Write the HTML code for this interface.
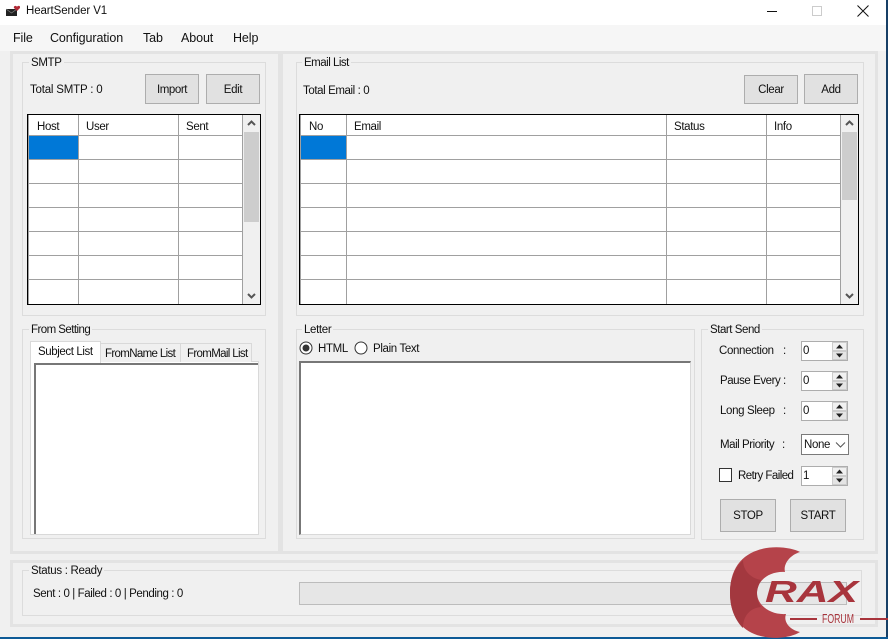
<!DOCTYPE html>
<html><head><meta charset="utf-8">
<style>
html,body{margin:0;padding:0}
body{width:888px;height:639px;overflow:hidden;position:relative;background:#f0f0f0;font-family:"Liberation Sans",sans-serif;font-size:11.500px;letter-spacing:-.35px;color:#111}
div,span.t{position:absolute;box-sizing:border-box}
span.t{white-space:nowrap;line-height:16px;margin-top:1px}
span.t.lbl{line-height:14px;margin-top:0}
.panel{border:3px solid #e3e3e3;background:#f0f0f0}
.grp{border:1px solid #dcdcdc}
.btn{background:#e1e1e1;border:1px solid #adadad;text-align:center;line-height:30px}
.tbl{background:#fff;border:1px solid #000;overflow:hidden}
.h{background:#a0a0a0;height:1px}
.v{background:#a0a0a0;width:1px}
.sb{background:#f0f0f0}
.th{background:#cdcdcd}
.sel{background:#0078d7}
.spin{background:#fff;border:1px solid #adadad}
.lbl{background:#f0f0f0;padding:0 2px}
span.t.m{font-size:12.500px;letter-spacing:-.1px;margin-top:0}
</style></head><body>
<div style="left:0;top:0;width:886px;height:25px;background:#fff"></div>
<div style="left:0;top:25px;width:886px;height:26px;background:#f6f6f6"></div>
<svg style="position:absolute;left:6px;top:5px" width="14" height="11" viewBox="0 0 14 11"><rect x="0" y="4" width="11" height="7" fill="#222"/><path d="M0 4l5.500 4 5.500-4" stroke="#888" fill="none" stroke-width=".7"/><path d="M11 6L8 3C7 1 10 0 11 1.700 12 0 15 1 14 3z" fill="#b02a36"/></svg>
<span class="t" style="left:26px;top:2px;font-size:11.500px;letter-spacing:-.1px">HeartSender V1</span>
<div style="left:767px;top:11px;width:10px;height:1px;background:#111"></div>
<div style="left:812px;top:6px;width:10px;height:10px;border:1px solid #ccc"></div>
<svg style="position:absolute;left:857px;top:5px" width="12" height="12" viewBox="0 0 12 12"><path d="M.5 .5L11.500 11.500M11.500 .5L.5 11.500" stroke="#111" stroke-width="1"/></svg>
<span class="t m" style="left:13px;top:30px">File</span>
<span class="t m" style="left:50px;top:30px">Configuration</span>
<span class="t m" style="left:143px;top:30px">Tab</span>
<span class="t m" style="left:181px;top:30px">About</span>
<span class="t m" style="left:233px;top:30px">Help</span>

<div class="panel" style="left:10px;top:51px;width:270px;height:503px;border-right-width:2px"></div>
<div class="panel" style="left:280px;top:51px;width:598px;height:503px"></div>
<div class="panel" style="left:10px;top:560px;width:868px;height:67px"></div>

<div class="grp" style="left:22px;top:62px;width:244px;height:254px"></div>
<span class="t lbl" style="left:29px;top:56px">SMTP</span>
<span class="t" style="left:30px;top:81px;letter-spacing:-.2px">Total SMTP : 0</span>
<div class="btn" style="left:145px;top:74px;width:54px;height:30px;letter-spacing:-.45px">Import</div>
<div class="btn" style="left:206px;top:74px;width:54px;height:30px">Edit</div>

<div class="tbl" style="left:27px;top:114px;width:234px;height:191px"></div>
<span class="t" style="left:37px;top:118px">Host</span>
<span class="t" style="left:86px;top:118px">User</span>
<span class="t" style="left:186px;top:118px">Sent</span>
<div class="sel" style="left:29px;top:136px;width:49px;height:23px"></div>
<div class="h" style="left:28px;top:135px;width:215px"></div>
<div class="h" style="left:28px;top:159px;width:215px"></div>
<div class="h" style="left:28px;top:183px;width:215px"></div>
<div class="h" style="left:28px;top:207px;width:215px"></div>
<div class="h" style="left:28px;top:231px;width:215px"></div>
<div class="h" style="left:28px;top:255px;width:215px"></div>
<div class="h" style="left:28px;top:279px;width:215px"></div>
<div class="v" style="left:28px;top:115px;height:189px"></div>
<div class="v" style="left:78px;top:115px;height:189px"></div>
<div class="v" style="left:178px;top:115px;height:189px"></div>
<div class="v" style="left:242px;top:115px;height:189px"></div>
<div class="sb" style="left:243px;top:115px;width:17px;height:189px"></div>
<div class="th" style="left:244px;top:132px;width:15px;height:90px"></div>
<svg style="position:absolute;left:247px;top:120px" width="9" height="6"><path d="M1 5L4.500 1.500 8 5" stroke="#555" stroke-width="2" fill="none"/></svg>
<svg style="position:absolute;left:247px;top:293px" width="9" height="6"><path d="M1 1L4.500 4.500 8 1" stroke="#555" stroke-width="2" fill="none"/></svg>

<div class="grp" style="left:296px;top:62px;width:568px;height:254px"></div>
<span class="t lbl" style="left:302px;top:56px;letter-spacing:-.5px">Email List</span>
<span class="t" style="left:303px;top:82px;letter-spacing:-.4px">Total Email : 0</span>
<div class="btn" style="left:744px;top:75px;width:54px;height:29px;line-height:29px">Clear</div>
<div class="btn" style="left:804px;top:74px;width:54px;height:30px">Add</div>

<div class="tbl" style="left:299px;top:114px;width:560px;height:191px"></div>
<span class="t" style="left:309px;top:118px">No</span>
<span class="t" style="left:354px;top:118px">Email</span>
<span class="t" style="left:674px;top:118px">Status</span>
<span class="t" style="left:774px;top:118px">Info</span>
<div class="sel" style="left:301px;top:136px;width:45px;height:23px"></div>
<div class="h" style="left:300px;top:135px;width:541px"></div>
<div class="h" style="left:300px;top:159px;width:541px"></div>
<div class="h" style="left:300px;top:183px;width:541px"></div>
<div class="h" style="left:300px;top:207px;width:541px"></div>
<div class="h" style="left:300px;top:231px;width:541px"></div>
<div class="h" style="left:300px;top:255px;width:541px"></div>
<div class="h" style="left:300px;top:279px;width:541px"></div>
<div class="v" style="left:300px;top:115px;height:189px"></div>
<div class="v" style="left:346px;top:115px;height:189px"></div>
<div class="v" style="left:666px;top:115px;height:189px"></div>
<div class="v" style="left:766px;top:115px;height:189px"></div>
<div class="v" style="left:840px;top:115px;height:189px"></div>
<div class="sb" style="left:841px;top:115px;width:17px;height:189px"></div>
<div class="th" style="left:842px;top:132px;width:15px;height:68px"></div>
<svg style="position:absolute;left:845px;top:120px" width="9" height="6"><path d="M1 5L4.500 1.500 8 5" stroke="#555" stroke-width="2" fill="none"/></svg>
<svg style="position:absolute;left:845px;top:293px" width="9" height="6"><path d="M1 1L4.500 4.500 8 1" stroke="#555" stroke-width="2" fill="none"/></svg>

<div class="grp" style="left:22px;top:329px;width:244px;height:210px"></div>
<span class="t lbl" style="left:29px;top:323px;letter-spacing:-.55px">From Setting</span>
<div style="left:30px;top:361px;width:229px;height:174px;background:#fff;border:1px solid #d9d9d9"></div>
<div style="left:34px;top:363px;width:224px;height:171px;border-left:2px solid #777;border-top:2px solid #777"></div>
<div style="left:100px;top:343px;width:81px;height:19px;background:#f0f0f0;border:1px solid #d9d9d9;border-bottom:0"></div>
<div style="left:180px;top:343px;width:72px;height:19px;background:#f0f0f0;border:1px solid #d9d9d9;border-bottom:0"></div>
<div style="left:30px;top:341px;width:71px;height:22px;background:#fff;border:1px solid #d9d9d9;border-bottom:0"></div>
<span class="t" style="left:38px;top:343px;letter-spacing:-.4px">Subject List</span>
<span class="t" style="left:105px;top:345px;letter-spacing:-.65px">FromName List</span>
<span class="t" style="left:187px;top:345px;letter-spacing:-.65px">FromMail List</span>

<div class="grp" style="left:296px;top:329px;width:399px;height:210px"></div>
<span class="t lbl" style="left:302px;top:323px">Letter</span>
<svg style="position:absolute;left:299px;top:341px" width="14" height="14"><circle cx="7" cy="7" r="6" fill="#fff" stroke="#333"/><circle cx="7" cy="7" r="3.500" fill="#333"/></svg>
<span class="t" style="left:318px;top:340px">HTML</span>
<svg style="position:absolute;left:354px;top:341px" width="14" height="14"><circle cx="7" cy="7" r="6" fill="#fff" stroke="#333"/></svg>
<span class="t" style="left:373px;top:340px">Plain Text</span>
<div style="left:299px;top:361px;width:392px;height:174px;background:#fff;border:1px solid #d9d9d9;border-left:2px solid #777;border-top:2px solid #777"></div>

<div class="grp" style="left:701px;top:329px;width:163px;height:211px"></div>
<span class="t lbl" style="left:708px;top:323px;letter-spacing:-.45px">Start Send</span>
<span class="t" style="left:719px;top:342px">Connection</span><span class="t" style="left:783px;top:342px">:</span>
<span class="t" style="left:720px;top:372px;letter-spacing:-.45px">Pause Every :</span>
<span class="t" style="left:720px;top:402px">Long Sleep</span><span class="t" style="left:783px;top:402px">:</span>
<span class="t" style="left:720px;top:436px;letter-spacing:-.45px">Mail Priority</span><span class="t" style="left:782px;top:436px">:</span>
<span class="t" style="left:738px;top:467px;letter-spacing:-.55px">Retry Failed</span>
<div style="left:719px;top:468px;width:13px;height:14px;background:#fff;border:1px solid #333"></div>

<div class="spin" style="left:801px;top:341px;width:47px;height:20px"></div><span class="t" style="left:803px;top:342px">0</span>
<div class="spin" style="left:801px;top:371px;width:47px;height:20px"></div><span class="t" style="left:803px;top:372px">0</span>
<div class="spin" style="left:801px;top:401px;width:47px;height:20px"></div><span class="t" style="left:803px;top:402px">0</span>
<div class="spin" style="left:801px;top:466px;width:47px;height:20px"></div><span class="t" style="left:803px;top:467px">1</span>
<svg style="position:absolute;left:832px;top:342px" width="15" height="18"><rect x=".5" y=".5" width="14" height="8" fill="#f0f0f0" stroke="#ccc"/><rect x=".5" y="9.500" width="14" height="8" fill="#e4e4e4" stroke="#ccc"/><path d="M7.500 2.500L11 6.500H4zM4 11.500H11L7.500 15.500z" fill="#222"/></svg>
<svg style="position:absolute;left:832px;top:372px" width="15" height="18"><rect x=".5" y=".5" width="14" height="8" fill="#f0f0f0" stroke="#ccc"/><rect x=".5" y="9.500" width="14" height="8" fill="#e4e4e4" stroke="#ccc"/><path d="M7.500 2.500L11 6.500H4zM4 11.500H11L7.500 15.500z" fill="#222"/></svg>
<svg style="position:absolute;left:832px;top:402px" width="15" height="18"><rect x=".5" y=".5" width="14" height="8" fill="#f0f0f0" stroke="#ccc"/><rect x=".5" y="9.500" width="14" height="8" fill="#e4e4e4" stroke="#ccc"/><path d="M7.500 2.500L11 6.500H4zM4 11.500H11L7.500 15.500z" fill="#222"/></svg>
<svg style="position:absolute;left:832px;top:467px" width="15" height="18"><rect x=".5" y=".5" width="14" height="8" fill="#f0f0f0" stroke="#ccc"/><rect x=".5" y="9.500" width="14" height="8" fill="#e4e4e4" stroke="#ccc"/><path d="M7.500 2.500L11 6.500H4zM4 11.500H11L7.500 15.500z" fill="#222"/></svg>
<div style="left:801px;top:434px;width:48px;height:21px;background:#fff;border:1px solid #7a7a7a"></div>
<span class="t" style="left:804px;top:436px">None</span>
<svg style="position:absolute;left:835px;top:441px" width="11" height="8"><path d="M1 1.500L5.500 6 10 1.500" stroke="#555" fill="none"/></svg>
<div class="btn" style="left:720px;top:499px;width:56px;height:33px;line-height:33px">STOP</div>
<div class="btn" style="left:790px;top:499px;width:56px;height:33px;line-height:33px">START</div>

<div class="grp" style="left:22px;top:570px;width:840px;height:46px"></div>
<span class="t lbl" style="left:29px;top:564px;letter-spacing:-.3px">Status : Ready</span>
<span class="t" style="left:33px;top:585px;letter-spacing:-.4px">Sent : 0 | Failed : 0 | Pending : 0</span>
<div style="left:299px;top:582px;width:548px;height:23px;background:#e6e6e6;border:1px solid #bcbcbc"></div>

<div style="left:886px;top:0;width:2px;height:639px;background:#173f66"></div>
<div style="left:0;top:637px;width:888px;height:2px;background:#0d5a96"></div>

<svg style="position:absolute;left:725px;top:540px" width="163" height="99" viewBox="0 0 163 99">
<path d="M75 12C60 4 5 0 5 53C5 105 60 102 75 92C65 90 58 82 61 74C45 75 32 65 32 53C32 40 45 31 60 32C58 24 65 15 75 12Z" fill="#b5434a"/>
<path d="M5 53C5 38 10 28 18 20C18 30 25 38 36 40C33 46 32 50 32 53C32 58 33 62 36 67C25 68 18 76 18 88C10 80 5 68 5 53Z" fill="#a3383f"/>
<text x="40" y="62" font-family="Liberation Sans,sans-serif" font-size="31" font-weight="700" font-style="italic" fill="#a8343c" textLength="93" lengthAdjust="spacingAndGlyphs" style="letter-spacing:0">RAX</text>
<rect x="65" y="78" width="27" height="2" fill="#a8343c"/>
<text x="97" y="83" font-family="Liberation Sans,sans-serif" font-size="13" fill="#a8343c" textLength="32" lengthAdjust="spacingAndGlyphs" style="letter-spacing:0">FORUM</text>
<rect x="135" y="78" width="28" height="2" fill="#a8343c"/>
</svg>
</body></html>
